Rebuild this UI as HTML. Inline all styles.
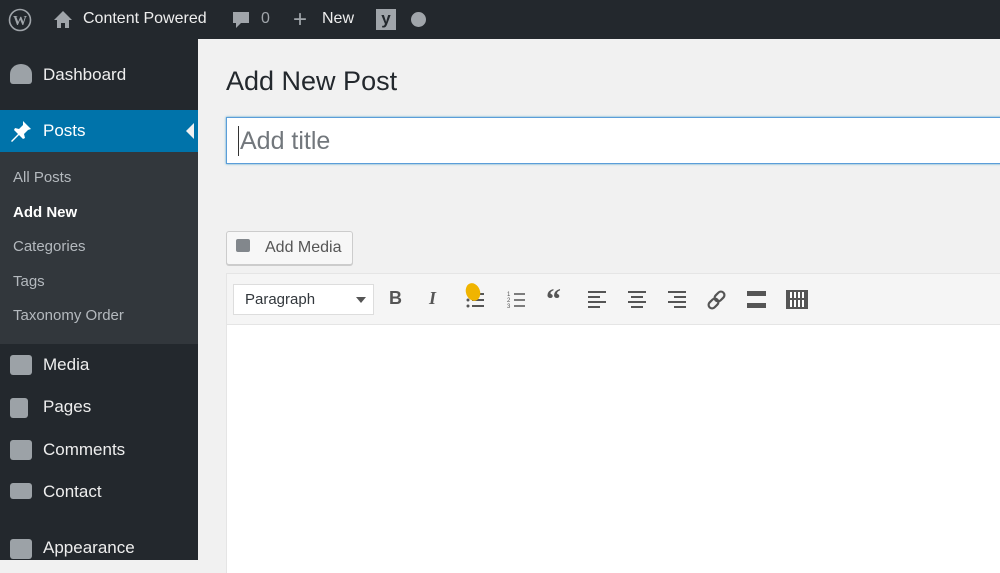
<!DOCTYPE html><html><head><style>
*{margin:0;padding:0;box-sizing:border-box}
body{width:1000px;height:560px;overflow:hidden;background:#f1f1f1;font-family:"Liberation Sans",sans-serif;position:relative}
.bar{position:absolute;left:0;top:0;width:1000px;height:39px;background:#23282d;color:#eee;font-size:16px}
.bar span{position:absolute;top:10px}
.side{position:absolute;left:0;top:39px;width:198px;height:521px;background:#23282d;color:#eee;font-size:17px}
.side .it{position:absolute;left:43px}
.ic{position:absolute;left:10px;width:22px;height:20px;background:#9ca2a7;border-radius:3px}
.sub{position:absolute;left:0;top:113px;width:198px;height:192px;background:#32373c;font-size:15px;color:#b4b9be}
.sub div{position:absolute;left:13px}
.tb{position:absolute;font-size:18px;color:#555;top:288px;font-weight:bold}
svg.t{position:absolute;top:290px}
</style></head><body>
<div class="bar">
<svg style="position:absolute;left:8px;top:8px" width="24" height="24" viewBox="0 0 24 24"><circle cx="12" cy="12" r="10.5" fill="none" stroke="#a0a5aa" stroke-width="1.6"/><text x="12" y="17" text-anchor="middle" font-size="14" font-family="Liberation Serif" font-weight="bold" fill="#a0a5aa">W</text></svg>
<svg style="position:absolute;left:53px;top:10px" width="20" height="19" viewBox="0 0 20 19"><path d="M10 1L1 10h3v8h4v-5h4v5h4v-8h3z" fill="#a0a5aa"/></svg>
<span style="left:83px">Content Powered</span>
<svg style="position:absolute;left:231px;top:11px" width="20" height="20"><path d="M2 1h16v11h-8l-5 5v-5H2z" fill="#a0a5aa"/></svg>
<span style="left:261px;color:#a0a5aa">0</span>
<span style="left:293px;top:6px;font-size:24px;color:#a0a5aa">+</span>
<span style="left:322px">New</span>
<div style="position:absolute;left:376px;top:9px;width:20px;height:21px;background:#a0a5aa;color:#23282d;font-weight:bold;text-align:center;font-size:17px">y</div>
<div style="position:absolute;left:411px;top:12px;width:15px;height:15px;border-radius:50%;background:#a0a5aa"></div>
</div>
<div class="side">
<div class="ic" style="top:25px;border-radius:50% 50% 3px 3px"></div><div class="it" style="top:26px">Dashboard</div>
<div style="position:absolute;left:0;top:71px;width:198px;height:42px;background:#0073aa"></div>
<div style="position:absolute;left:186px;top:84px;border:8px solid transparent;border-right-color:#f1f1f1;border-left:0"></div>
<svg style="position:absolute;left:9px;top:80px" width="24" height="24" viewBox="0 0 24 24"><path d="M14 2l8 8-3 1-4 4 1 4-2 1-4-4-7 7-1-1 7-7-4-4 1-2 4 1 4-4z" fill="#fff"/></svg><div class="it" style="top:82px;color:#fff">Posts</div>
<div class="sub">
<div style="top:17px">All Posts</div>
<div style="top:52px;color:#fff;font-weight:bold">Add New</div>
<div style="top:86px">Categories</div>
<div style="top:121px">Tags</div>
<div style="top:155px">Taxonomy Order</div>
</div>
<div class="ic" style="top:316px"></div><div class="it" style="top:316px">Media</div>
<div class="ic" style="top:359px;width:18px"></div><div class="it" style="top:358px">Pages</div>
<div class="ic" style="top:401px"></div><div class="it" style="top:401px">Comments</div>
<div class="ic" style="top:444px;height:16px"></div><div class="it" style="top:443px">Contact</div>
<div class="ic" style="top:500px"></div><div class="it" style="top:499px">Appearance</div>
</div>
<div style="position:absolute;left:226px;top:66px;font-size:27px;color:#23282d">Add New Post</div>
<div style="position:absolute;left:226px;top:117px;width:790px;height:47px;background:#fff;border:1px solid #5b9dd9;box-shadow:0 0 2px rgba(30,140,190,.8)"></div>
<div style="position:absolute;left:238px;top:126px;width:1px;height:30px;background:#333"></div>
<div style="position:absolute;left:240px;top:127px;font-size:25px;color:#72777c">Add title</div>
<div style="position:absolute;left:226px;top:231px;width:127px;height:34px;border:1px solid #ccc;background:#f7f7f7;border-radius:3px;box-shadow:0 1px 0 #ccc"></div>
<div style="position:absolute;left:236px;top:239px;width:14px;height:13px;background:#82878c;border-radius:2px"></div>
<div style="position:absolute;left:265px;top:239px;font-size:16px;color:#555">Add Media</div>
<div style="position:absolute;left:226px;top:273px;width:790px;height:300px;border:1px solid #e5e5e5;border-bottom:0;background:#fff"></div>
<div style="position:absolute;left:227px;top:274px;width:790px;height:51px;background:#f5f5f5;border-bottom:1px solid #e5e5e5"></div>
<div style="position:absolute;left:233px;top:284px;width:141px;height:31px;background:#fff;border:1px solid #ddd"></div>
<div style="position:absolute;left:245px;top:291px;font-size:15px;color:#32373c">Paragraph</div>
<div style="position:absolute;left:356px;top:297px;border:5px solid transparent;border-top:6px solid #555;border-bottom:0"></div>
<div class="tb" style="left:389px">B</div>
<div class="tb" style="left:429px;font-style:italic;font-family:'Liberation Serif'">I</div>
<svg class="t" style="left:466px" width="20" height="20"><g stroke="#555" stroke-width="2"><path d="M6 4h12M6 10h12M6 16h12"/></g><g fill="#555"><circle cx="2" cy="4" r="1.5"/><circle cx="2" cy="10" r="1.5"/><circle cx="2" cy="16" r="1.5"/></g></svg>
<div style="position:absolute;left:466px;top:283px;width:14px;height:18px;border-radius:50%;background:#f0b400;transform:rotate(-20deg)"></div>
<svg class="t" style="left:507px" width="20" height="20"><g stroke="#555" stroke-width="1.5"><path d="M7 4h11M7 10h11M7 16h11"/></g><g fill="#555" font-size="6" font-family="Liberation Sans"><text x="0" y="6">1</text><text x="0" y="12">2</text><text x="0" y="18">3</text></g></svg>
<div class="tb" style="left:546px;font-size:30px;top:283px;font-family:'Liberation Serif'">“</div>
<svg class="t" style="left:587px" width="20" height="20"><g stroke="#555" stroke-width="2"><path d="M1 2h18M1 7h12M1 12h18M1 17h12"/></g></svg>
<svg class="t" style="left:627px" width="20" height="20"><g stroke="#555" stroke-width="2"><path d="M1 2h18M4 7h12M1 12h18M4 17h12"/></g></svg>
<svg class="t" style="left:667px" width="20" height="20"><g stroke="#555" stroke-width="2"><path d="M1 2h18M7 7h12M1 12h18M7 17h12"/></g></svg>
<svg class="t" style="left:707px" width="20" height="20"><g stroke="#555" stroke-width="2.2" fill="none"><rect x="9" y="1" width="7" height="11" rx="3.5" transform="rotate(45 12.5 6.5)"/><rect x="3" y="8" width="7" height="11" rx="3.5" transform="rotate(45 6.5 13.5)"/></g></svg>
<div style="position:absolute;left:747px;top:291px;width:19px;height:5px;background:#555"></div>
<div style="position:absolute;left:747px;top:303px;width:19px;height:5px;background:#555"></div>
<div style="position:absolute;left:786px;top:290px;width:22px;height:19px;border:2px solid #555;background:repeating-linear-gradient(90deg,#555 0 2px,#fff 2px 4px)"></div>
<div style="position:absolute;left:788px;top:298px;width:18px;height:2px;background:#555"></div>
</body></html>
